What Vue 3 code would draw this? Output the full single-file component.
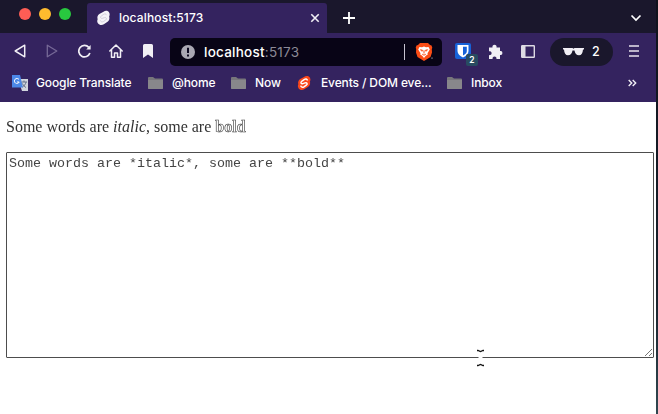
<script setup>
const bookmarks = [
  { label: 'Google Translate', icon: 'translate', width: 136 },
  { label: '@home', icon: 'folder', width: 83 },
  { label: 'Now', icon: 'folder', width: 66 },
  { label: 'Events / DOM eve...', icon: 'svelte', width: 150 },
  { label: 'Inbox', icon: 'folder', width: 100 }
]
const source = 'Some words are *italic*, some are **bold**'
</script>

<template>
  <div class="screen">
    <div class="window">
      <header class="tabs">
        <div class="lights"><i class="red"></i><i class="yellow"></i><i class="green"></i></div>
        <div class="tab">
          <svg class="favicon" width="14" height="16" viewBox="0 0 14 16">
            <path d="M7 1.2C9-.2 12-.2 13.2 2.300c.8 1.700.4 3-.1 4 .7 2.200.1 4.500-1.700 5.800l-4 2.600c-2.200 1.400-5 1-6.400-1.100-1-1.600-.9-3-.3-4.300C0 7.200.6 5 2.500 3.800z" fill="#f5f3f8" />
            <path d="M10.300 5C9.800 3.300 8.300 3.300 7.300 4L4.700 5.700c-1.800 1.300-.6 3.200 1 2.700l2.400-.8c2-.7 2.900 1.500 1.300 2.600l-2.500 1.600c-1.300.8-2.800.5-3.200-1.200" fill="none" stroke="#cfccd8" stroke-width="1" />
          </svg>
          <span class="tab-title">localhost:5173</span>
          <svg class="close" width="10" height="10" viewBox="0 0 10 10"><path d="M1.300 1.300l7.400 7.400m0-7.400L1.300 8.700" stroke="#f1eff5" stroke-width="1.600" /></svg>
        </div>
        <svg class="plus" width="12" height="12" viewBox="0 0 12 12"><path d="M6 0v12M0 6h12" stroke="#fff" stroke-width="1.800" /></svg>
        <svg class="chevron" width="12" height="8" viewBox="0 0 12 8"><path d="M1.500 1.500L6 6l4.500-4.500" fill="none" stroke="#fff" stroke-width="1.700" /></svg>
      </header>

      <nav class="toolbar">
        <svg class="back" width="12" height="14" viewBox="0 0 12 14"><path d="M10.700 1.200v11.600L1.200 7z" fill="none" stroke="#f1eff5" stroke-width="1.500" stroke-linejoin="round" /></svg>
        <svg class="forward" width="12" height="14" viewBox="0 0 12 14"><path d="M1.300 1.200v11.600L10.800 7z" fill="none" stroke="#766997" stroke-width="1.300" stroke-linejoin="round" /></svg>
        <svg class="reload" width="15" height="14" viewBox="0 0 15 14"><path d="M11.800 3.400A5.700 5.700 0 1 0 12.900 9" fill="none" stroke="#f1eff5" stroke-width="1.700" /><path d="M13.600 1v4.500H9.200z" fill="#f1eff5" /></svg>
        <svg class="home" width="14" height="14" viewBox="0 0 14 14"><path d="M.8 7L7 1l6.200 6M2.500 5.700v7.500h3V8.900h3v4.300h3V5.700" fill="none" stroke="#f1eff5" stroke-width="1.500" stroke-linejoin="round" stroke-linecap="round" /></svg>
        <svg class="mark" width="10" height="14" viewBox="0 0 10 14"><path d="M0 1.500Q0 0 1.500 0h7Q10 0 10 1.500V14L5 10.500 0 14z" fill="#f1eff5" /></svg>
        <div class="address">
          <svg width="14" height="14" viewBox="0 0 14 14"><circle cx="7" cy="7" r="7" fill="#aaa8b3" /><path d="M7 2.700v5.300M7 9.500v1.900" stroke="#0c0820" stroke-width="2" /></svg>
          <span class="url">localhost<span>:5173</span></span>
          <i class="divider"></i>
          <svg class="brave" width="18" height="18" viewBox="0 0 18 18">
            <path d="M5 0h8l2 2 1.500.5.8 2.200-.5 1.200.2 3.600-1.500 4.500L9 18l-6.500-4L1 9.500l.2-3.600L.7 4.700l.8-2.200L3 2z" fill="#fb4d16" />
            <path d="M4.500 4l2.500.2L9 3.500l2 .7 2.500-.2 1.300 2.500-2.300 3.700.3 1.300-2 1.200L9 15l-1.800-2.300-2-1.200.3-1.300-2.300-3.700z" fill="#fff" />
            <path d="M5.500 6.700l2.300.7-.8.900zm7 0l-2.300.7.8.900zM9 7.500v3M7.200 11.200l1.800 1 1.800-1" fill="none" stroke="#fb4d16" stroke-width="1" />
            <circle cx="17" cy="15" r=".6" fill="#fff" />
          </svg>
        </div>
        <div class="vault">
          <svg width="16" height="16" viewBox="0 0 16 16"><rect width="16" height="16" rx="2" fill="#1762d8" /><path d="M2.500 2h11v6c0 3-2.300 5-5.500 6.500C4.800 13 2.500 11 2.500 8z" fill="#fff" /><path d="M8 3.700h3.800V8c0 2-1.400 3.300-3.800 4.600z" fill="#1762d8" /></svg>
          <b>2</b>
        </div>
        <svg class="puzzle" width="15" height="15" viewBox="0 0 15 15"><path d="M1 3.500h3.500a2.100 2.100 0 1 1 4 0H12v3.600a2 2 0 1 1 0 3.900v4H8.400a2 2 0 1 0-3.800 0H1v-3.900a2 2 0 1 0 0-3.800z" fill="#f1eff5" /></svg>
        <svg class="side" width="14" height="13" viewBox="0 0 14 13"><rect x=".7" y=".7" width="12.600" height="11.600" rx=".5" fill="none" stroke="#dedbe4" stroke-width="1.400" /><path d="M1 1h3.500v11H1z" fill="#dedbe4" /></svg>
        <div class="private">
          <svg width="21" height="8" viewBox="0 0 21 8"><path d="M0 0h9.500l1 .8 1-.8H21v1.500h-1c-.3 3.700-1.500 5.800-4 5.800-2.600 0-4-2-4.500-4.800h-2C9 5.300 7.600 7.300 5 7.300 2.500 7.300 1.300 5.200 1 1.500H0z" fill="#f1eff5" /></svg>
          <span>2</span>
        </div>
        <svg class="menu" width="10" height="12" viewBox="0 0 10 12"><path d="M0 1h10M0 6h10M0 11h10" stroke="#e7e4ed" stroke-width="1.600" /></svg>
      </nav>

      <div class="bookmarks">
        <div v-for="item in bookmarks" :key="item.label" class="bookmark" :style="{ width: item.width + 'px' }">
          <svg v-if="item.icon === 'translate'" width="17" height="16" viewBox="0 0 17 16">
            <path d="M6 4h10v12h-6z" fill="#d1d5dd" /><path d="M0 0h8l3 12.500H0z" fill="#4c88e8" />
            <path d="M7 4.600A2.500 2.500 0 1 0 7.200 7H4.900" fill="none" stroke="#fff" stroke-width="1" />
            <path d="M9.500 7h5.500M12 5.500V7m2 0c-.5 2.500-2 4-3.500 5M10.500 8.500c.7 2 2 3 3.500 4" fill="none" stroke="#65738a" />
          </svg>
          <svg v-else-if="item.icon === 'folder'" width="17" height="16" viewBox="0 0 17 16">
            <path d="M0 3q0-1 1-1h4l2 1.500h7q1 0 1 1V13q0 1-1 1H1q-1 0-1-1z" fill="#77767b" /><path d="M0 5h15v8q0 1-1 1H1q-1 0-1-1z" fill="#88878b" />
          </svg>
          <svg v-else width="17" height="16" viewBox="0 0 17 16">
            <path d="M7 2C9 .5 12 .6 13 3c.7 1.500.4 2.500-.1 3.500.7 2-.1 4.200-1.700 5.200l-4 2.600c-2 1.300-4.600.8-5.700-1.100-.8-1.500-.8-2.600-.2-3.900-.6-1.800.1-4 1.900-5.200z" fill="#fb471b" />
            <path d="M10.500 5.500C10 3.800 8.500 3.700 7.500 4.400L5 6C3 7.400 4.200 9.200 6 8.600l2-.7c2-.7 2.900 1.200 1.300 2.300l-2.400 1.600c-1.300.8-2.800.5-3.200-1.200" fill="none" stroke="#fff" stroke-width="1.500" />
          </svg>
          <span>{{ item.label }}</span>
        </div>
        <svg class="more" width="9" height="8" viewBox="0 0 9 8"><path d="M.7 1l3 3-3 3M4.700 1l3 3-3 3" fill="none" stroke="#f1eff5" stroke-width="1.400" /></svg>
      </div>

      <main class="page">
        <p>Some words are <i>italic</i>, some are <b>bold</b></p>
        <div class="editor">
          <span>{{ source }}</span>
          <svg class="grip" width="9" height="9" viewBox="0 0 9 9"><path d="M1 8l7-7M5 8l3-3" stroke="#666" stroke-width=".9" /></svg>
        </div>
        <svg class="cursor" width="10" height="18" viewBox="0 0 10 18"><path d="M3.500 7h4v4h-4z" fill="#fff" /><path d="M2 1.500h1l2.500 1 2.500-1h1M2 16.500h1l2.500-1 2.500 1h1" fill="none" stroke="#111" stroke-width="1.300" /></svg>
      </main>
    </div>
    <aside class="edge"></aside>
  </div>
</template>

<style>
body { overflow: hidden; }
</style>

<style scoped>
.screen { width: 658px; height: 414px; display: flex; background: #fff; overflow: hidden; }
.window { width: 656px; flex: none; font-family: Inter, "Liberation Sans", sans-serif; position: relative; }
.edge { width: 2px; background: linear-gradient(#10121d, #18212b 70%, #304750); }
svg { display: block; flex: none; }
.tabs { height: 33px; display: flex; background: #1a172c; }
.lights { width: 87px; height: 28px; box-sizing: border-box; padding-left: 19px; display: flex; gap: 8px; align-items: center; }
.lights i { width: 12px; height: 12px; border-radius: 50%; }
.red { background: #fe5d55; }
.yellow { background: #febb2e; }
.green { background: #28c83f; }
.tab { width: 240px; height: 30px; box-sizing: border-box; margin-top: 3px; padding: 0 7px 0 10px; display: flex; align-items: center; background: #34235f; border-radius: 3px 3px 0 0; color: #fff; }
.favicon { width: 13px; height: 16px; }
.tab-title { margin-left: 9px; font-size: 12px; font-weight: 500; letter-spacing: .15px; line-height: 16px; }
.close { margin-left: auto; }
.plus { margin: 12px 0 0 16px; }
.chevron { margin: 14px 14px 0 auto; }
.toolbar { height: 37px; display: flex; align-items: center; background: #34235f; }
.toolbar > svg { margin-top: -1px; }
.back { margin-left: 14px; }
.forward { margin-left: 20px; }
.reload { margin-left: 19px; }
.home { margin-left: 17px; }
.mark { margin-left: 20px; }
.address { width: 272px; height: 28px; box-sizing: border-box; margin-left: 17px; padding: 0 9px 0 11px; border-radius: 5px; display: flex; align-items: center; background: #080416; }
.url { margin-left: 9px; color: #fff; font-size: 13.5px; line-height: 18px; font-weight: 500; letter-spacing: .23px; }
.url span { color: #8c8a97; font-weight: 400; }
.divider { margin-left: auto; width: 1px; height: 16px; background: #c7c3d0; }
.brave { margin-left: 10px; }
.vault { width: 23px; height: 23px; margin-left: 13px; position: relative; display: flex; margin-top: 6px; }
.vault b { position: absolute; right: 0; bottom: 0; width: 12px; height: 12px; border-radius: 2px; background: #284b61; color: #fff; font-size: 8.5px; line-height: 12px; text-align: center; font-weight: 600; }
.puzzle { margin-left: 10px; }
.side { margin-left: 18px; }
.private { width: 63px; height: 28px; box-sizing: border-box; margin-left: 15px; padding-left: 13px; display: flex; align-items: center; background: #1a172c; border-radius: 14px; color: #fff; font-size: 12.5px; font-weight: 500; }
.private span { margin-left: 8px; }
.menu { margin-left: 16px; }
.bookmarks { height: 32px; box-sizing: border-box; padding: 0 19px 6px 12px; display: flex; align-items: center; background: #34235f; }
.bookmark { display: flex; align-items: center; gap: 7px; color: #fff; font-size: 12px; line-height: 16px; font-weight: 500; letter-spacing: -.12px; white-space: nowrap; }
.more { margin-left: auto; }
.page { padding: 15px 2px 0 6px; position: relative; color: #333; will-change: transform; }
.page p { height: 20px; margin: 0 0 15px; font: 16px/20px "Liberation Serif", "Times New Roman", serif; }
.page b { color: #fff; -webkit-text-stroke: .6px #333; }
.editor { width: 648px; height: 206px; box-sizing: border-box; border: 1px solid #4d4d4d; border-radius: 1px; padding: 2px; position: relative; font: 13.333px/18px "Liberation Mono", "Courier New", monospace; white-space: pre; color: #444; }
.grip { position: absolute; right: 0; bottom: 0; }
.cursor { position: absolute; left: 475px; top: 247px; }
</style>
